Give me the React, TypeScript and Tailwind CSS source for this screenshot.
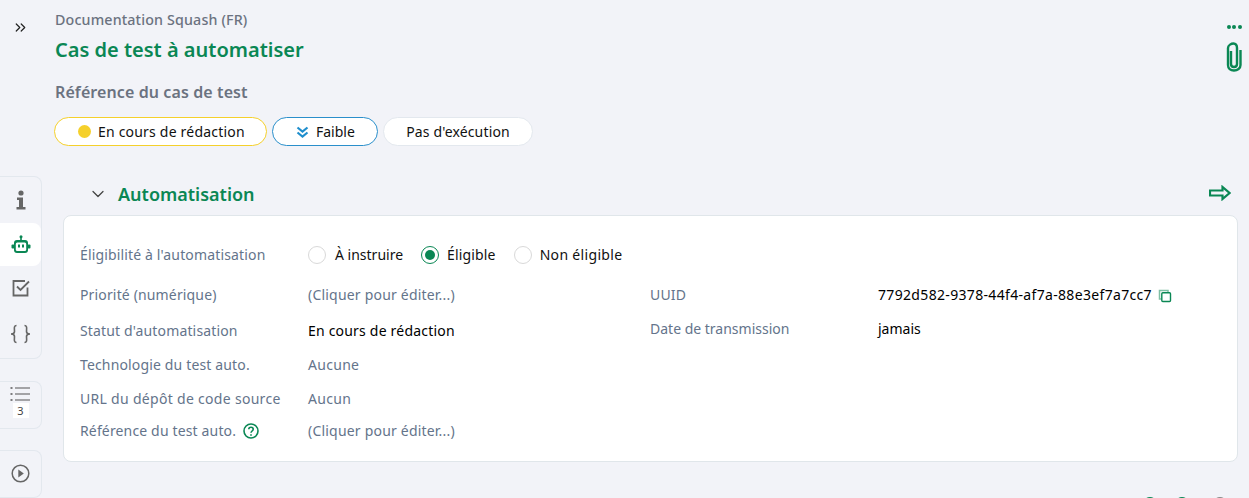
import { ChevronDown, ChevronsRight } from "lucide-react";

const FONT = "[font-family:'Noto_Sans',sans-serif]";

const Row = ({ label, value, dark, className, valueClass, labelClass, children }: { label: string; value: string; dark?: boolean; className: string; valueClass?: string; labelClass?: string; children?: React.ReactNode }) => (
  <div className={`flex items-center ${className}`}>
    <div className={`w-[228px] flex items-center gap-[7px] text-[#64748b] ${labelClass ?? ""}`}>
      <span>{label}</span>
      {children}
    </div>
    <div className={`${dark ? "text-black" : "text-[#64748b]"} ${valueClass ?? ""}`}>{value}</div>
  </div>
);

const Radio = ({ label, checked, className }: { label: string; checked?: boolean; className?: string }) => (
  <div className={`flex items-center gap-[8px] text-[#111] ${className ?? ""}`}>
    <span className={`w-[18px] h-[18px] rounded-full bg-white flex items-center justify-center border ${checked ? "border-[#0a8754]" : "border-[#d9d9d9]"}`}>
      {checked && <span className="w-[10px] h-[10px] rounded-full bg-[#0a8754]" />}
    </span>
    {label}
  </div>
);

export default function App() {
  return (
    <div className={`${FONT} h-[498px] w-[1249px] overflow-hidden bg-[#f2f3f8] flex text-[14px] leading-[20px] tracking-[0.15px]`}>
      {/* Left rail */}
      <aside className="w-[42px] shrink-0 flex flex-col">
        <div className="h-[176px] shrink-0 pt-[19px] pl-[12px]">
          <ChevronsRight size={17} strokeWidth={1.7} className="text-[#222]" />
        </div>
        <div className="h-[183px] shrink-0 rounded-r-lg border border-l-0 border-[#e3e8ee]">
          <div className="h-[46px] flex items-center justify-center text-[#666]">
            <svg width="10" height="20" viewBox="0 0 10 20" fill="currentColor">
              <circle cx="5" cy="3" r="2.6" />
              <path d="M1 7.5h6v9.5h2.5v2.5H.5V17H3v-7H1z" />
            </svg>
          </div>
          <div className="h-[43px] w-[41px] rounded-r-lg bg-white flex items-center justify-center">
            <svg className="mt-[1px]" width="20" height="20" viewBox="0 0 20 20" fill="#0a8754">
              <circle cx="10" cy="1.8" r="1.5" />
              <rect x="9.2" y="2" width="1.6" height="3.5" />
              <rect x="3" y="5" width="14" height="13" rx="3" />
              <rect x="0.5" y="9.5" width="3" height="4" rx="1" />
              <rect x="16.5" y="9.5" width="3" height="4" rx="1" />
              <rect x="4.800" y="7.500" width="10.400" height="8.500" rx="1.500" fill="#fff" />
              <rect x="7" y="9.500" width="2" height="3" />
              <rect x="11" y="9.500" width="2" height="3" />
            </svg>
          </div>
          <div className="h-[44px] flex items-center justify-center">
            <svg width="18" height="18" viewBox="0 0 18 18" fill="none" stroke="#666" strokeWidth="1.8">
              <path d="M15.5 8.500V16.500H1.500V2H13" />
              <path d="M5 7.500l3.500 3.500L17 2.500" />
            </svg>
          </div>
          <div className="h-[47px] flex items-center justify-center text-[#666]">
            <svg width="21" height="20" viewBox="0 0 21 20" fill="none" stroke="currentColor" strokeWidth="1.6">
              <path d="M6.500 1.500C3.500 1.500 4.500 5 4.500 7.500 4.500 9 3 10 1 10 3 10 4.500 11 4.500 12.500 4.500 15 3.500 18.500 6.500 18.500" />
              <path d="M14.500 1.500C17.500 1.500 16.500 5 16.500 7.500 16.500 9 18 10 20 10 18 10 16.500 11 16.500 12.500 16.500 15 17.500 18.500 14.500 18.500" />
            </svg>
          </div>
        </div>
        <div className="mt-[22px] h-[48px] shrink-0 rounded-r-lg border border-l-0 border-[#e3e8ee] flex flex-col items-center pt-[4px]">
          <svg width="21" height="17" viewBox="0 0 21 17" stroke="#555" strokeWidth="1.2">
            <path d="M5 2h15M5 8h15M5 14h15" />
            <path d="M.5 2h2M.5 8h2M.5 14h2" strokeWidth="1.6" />
          </svg>
          <span className="w-[16px] h-[15px] bg-white text-[11px] leading-[15px] text-center text-[#444]">3</span>
        </div>
        <div className="mt-[21px] h-[48px] shrink-0 rounded-r-lg border border-l-0 border-[#e3e8ee] flex items-center justify-center">
          <svg className="-mt-[2px]" width="19" height="19" viewBox="0 0 19 19">
            <circle cx="9.500" cy="9.500" r="8.300" fill="none" stroke="#666" strokeWidth="1.500" />
            <path d="M7.300 5.500l5.500 4-5.500 4z" fill="#666" />
          </svg>
        </div>
      </aside>

      {/* Main */}
      <main className="flex-1 min-w-0 flex flex-col">
        <div className="shrink-0 flex justify-between pl-[13px] pr-[7px]">
          <div>
            <div className="mt-[10px] text-[14.25px] font-medium text-[#6b7280]">Documentation Squash (FR)</div>
            <h1 className="mt-[5px] text-[20px] leading-[30px] font-semibold text-[#0a8754] tracking-normal">Cas de test à automatiser</h1>
            <div className="mt-[15px] text-[16px] leading-[24px] font-semibold text-[#6b7280] tracking-[0.1px]">Référence du cas de test</div>
            <div className="mt-[13px] -ml-[1px] flex gap-[5px] text-[#111]">
              <div className="h-[29px] w-[213px] rounded-full bg-white border border-[#f5d02b] flex items-center pl-[23px] gap-[7px] tracking-[0.2px]">
                <span className="w-[13px] h-[13px] rounded-full bg-[#f5d02b]" />
                En cours de rédaction
              </div>
              <div className="h-[29px] w-[106px] rounded-full bg-white border border-[#2a8fcb] flex items-center pl-[23px] gap-[7px] tracking-normal">
                <svg width="13" height="12" viewBox="0 0 13 12" fill="none" stroke="#1f8ecd" strokeWidth="2.200">
                  <path d="M1.500 1.500l5 4 5-4M1.500 6.500l5 4 5-4" />
                </svg>
                Faible
              </div>
              <div className="h-[29px] w-[150px] rounded-full bg-white border border-[#e3e8ee] flex items-center justify-center">Pas d'exécution</div>
            </div>
          </div>
          <div className="flex flex-col items-center pt-[25px] w-[16px] text-[#0a8754]">
            <div className="flex gap-[1.500px]">
              <span className="w-[4px] h-[4px] rounded-full bg-[#0a8754]" />
              <span className="w-[4px] h-[4px] rounded-full bg-[#0a8754]" />
              <span className="w-[4px] h-[4px] rounded-full bg-[#0a8754]" />
            </div>
            <svg className="mt-[13px]" width="16" height="30" viewBox="0 0 16 30" fill="none" stroke="currentColor" strokeWidth="2.400">
              <path d="M5 9v13c0 2 1.200 3 3 3s3-1 3-3V6c0-3-1.500-4.500-3.500-4.500S2 3 2 6v17c0 3.500 2.500 5.500 6 5.500s6.500-2 6.500-5.500V8" />
            </svg>
          </div>
        </div>

        <div className="shrink-0 mt-[27px] pl-[46px] pr-[18px] h-[42px] flex items-center justify-between">
          <div className="flex items-center gap-[10px]">
            <ChevronDown size={20} strokeWidth={1.500} className="text-[#444]" />
            <h2 className="text-[18px] font-semibold text-[#0a8754] tracking-normal">Automatisation</h2>
          </div>
          <svg className="-mt-[3px]" width="22" height="16" viewBox="0 0 22 16" fill="none" stroke="#0a8754" strokeWidth="2.200">
            <path d="M1 5.500h12.500V2l7 6-7 6v-3.500H1z" />
          </svg>
        </div>

        <section className="shrink-0 ml-[21px] mr-[11px] h-[247px] rounded-lg bg-white border border-[#e0e6ea] pl-[16px] pt-[29px]">
          <div className="flex items-center h-[20px]">
            <div className="w-[228px] text-[#64748b]">Éligibilité à l'automatisation</div>
            <div className="flex gap-[18px]">
              <Radio label="À instruire" className="tracking-normal gap-[9px]" />
              <Radio label="Éligible" checked />
              <Radio label="Non éligible" className="tracking-[0.33px]" />
            </div>
          </div>
          <div className="flex mt-[20px]">
            <div className="w-[570px]">
              <Row className="h-[20px]" label="Priorité (numérique)" value="(Cliquer pour éditer...)" valueClass="tracking-[0.2px]" />
              <Row className="h-[20px] mt-[16px]" label="Statut d'automatisation" value="En cours de rédaction" valueClass="tracking-[0.2px]" dark />
              <Row className="h-[20px] mt-[14px]" label="Technologie du test auto." value="Aucune" valueClass="tracking-[0.3px]" />
              <Row className="h-[20px] mt-[13px] translate-y-[0.5px]" label="URL du dépôt de code source" labelClass="tracking-[0.3px]" value="Aucun" valueClass="tracking-[0.3px]" />
              <Row className="h-[20px] mt-[13px]" label="Référence du test auto." value="(Cliquer pour éditer...)" valueClass="tracking-[0.2px]">
                <svg width="16" height="16" viewBox="0 0 16 16" fill="none" stroke="#0a8754" strokeWidth="1.600">
                  <circle cx="8" cy="8" r="7" />
                  <path d="M5.800 6.200C5.800 3.500 10.200 3.500 10.200 6.200 10.200 8 8 8 8 9.800" />
                  <path d="M8 11.200v1.600" />
                </svg>
              </Row>
            </div>
            <div>
              <Row className="h-[20px]" label="UUID" value="7792d582-9378-44f4-af7a-88e3ef7a7cc7" valueClass="tracking-[0.33px]" dark />
              <Row className="h-[20px] mt-[14px]" label="Date de transmission" labelClass="tracking-normal" value="jamais" valueClass="tracking-normal" dark />
            </div>
            <svg className="ml-[6px] mt-[4px]" width="14" height="14" viewBox="0 0 14 14" fill="none">
              <path d="M3 10H1.500V1.500H10V3" stroke="#7fbfa5" strokeWidth="1.500" />
              <rect x="3.800" y="3.800" width="8.700" height="8.700" rx="1" stroke="#0a8754" strokeWidth="1.400" />
            </svg>
          </div>
        </section>

        {/* clipped action icons */}
        <div className="shrink-0 mt-[35px] pl-[1101px] flex">
          <span className="w-[14px] h-[14px] rounded-full border-2 border-[#0a8754]" />
          <span className="ml-[18px] w-[14px] h-[14px] rounded-full border-2 border-[#0a8754]" />
          <span className="ml-[24px] w-[14px] h-[14px] rounded-full border-2 border-[#888]" />
        </div>
      </main>
    </div>
  );
}
